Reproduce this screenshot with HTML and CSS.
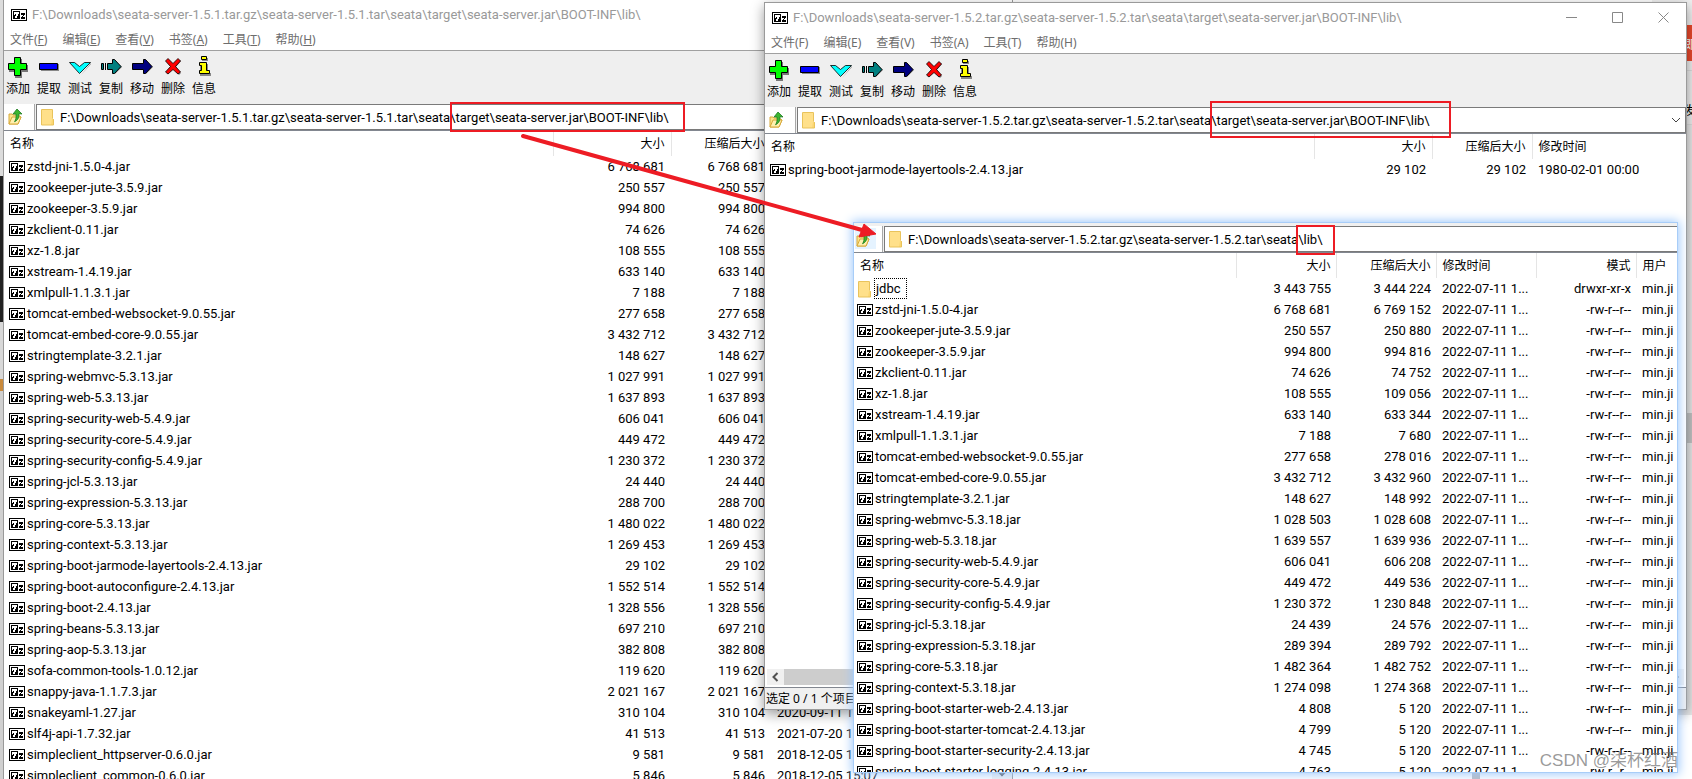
FILE: index.html
```html
<!DOCTYPE html>
<html lang="zh-CN">
<head>
<meta charset="utf-8">
<title>7-Zip</title>
<link rel="stylesheet" href="styles.css">
</head>
<body>
<svg class="defs" aria-hidden="true">
  <symbol id="z" viewBox="0 0 16 12"><g shape-rendering="crispEdges"><path d="M0 0h16v12H0z"/><path fill="#fff" d="M1 1h14v10H1z"/><path d="M2 2h7v8H2z"/><path fill="#fff" d="M3 3h5v2H7v2H6v2H4V7h1V5H4v1H3z"/><path d="M10 4h4v2h-1v1h-1v1h2v2h-4V8h1V7h1V6h-2z"/></g></symbol>
  <symbol id="folder" viewBox="0 0 14 17"><path fill="#ffe08a" d="M0 1h11v15H0z"/><path fill="#fbd672" d="M11 10h2v6h-3z"/><path fill="none" stroke="#e9c35b" d="M.5.5h11v9l1 1v5.500H.5z"/></symbol>
  <symbol id="up" viewBox="0 0 16 18"><path fill="#fbe58c" stroke="#d8a93a" d="M1 6h3l1 1h5l3 2-3 7H1z"/><path fill="#fff0ae" stroke="#d8a93a" d="M1 16l3-7h9l-3 7z"/><path fill="#3cb62f" stroke="#1c7a20" stroke-width=".8" d="M9 1l5 5-3-.3c0 4-1 6.500-4.500 8 1.500-2 1.800-4.500 1.500-7.700L5 6z"/></symbol>
  <symbol id="add" viewBox="0 0 24 22"><path fill="#777" d="M9 3h7v6h6v7h-6v6H9v-6H3V9h6z"/><path fill="#0f0" stroke="#000" d="M8.500 1.500h6v6h6v6h-6v6h-6v-6h-6v-6h6z"/></symbol>
  <symbol id="ext" viewBox="0 0 24 22"><path fill="#888" d="M4 8h18v7H4z"/><path fill="#00f" stroke="#000" d="M2.500 7.500h18v6h-18z"/></symbol>
  <symbol id="test" viewBox="0 0 24 22"><path fill="#888" d="M3 7l10 12L23 7v1L13 19z"/><path fill="#0ff" stroke="#000" stroke-width=".8" d="M1.500 6.500h5l5 4 5-4h6L11.500 17.500z"/></symbol>
  <symbol id="copy" viewBox="0 0 24 22"><path fill="#888" d="M15 4l8 7-7 7z"/><path fill="#008080" stroke="#000" d="M2.500 7.500h2v6h-2zM8.500 7.500h5v-4l2 0 6.500 7-6.500 7h-2v-4h-5z"/><path d="M6 7h1v7H6z"/></symbol>
  <symbol id="move" viewBox="0 0 24 22"><path fill="#888" d="M15 4l8 7-7 7z"/><path fill="#000080" stroke="#000" d="M2.500 7.500h11v-4l2 0 6.500 7-6.500 7h-2v-4h-11z"/></symbol>
  <symbol id="del" viewBox="0 0 24 22"><path fill="#888" d="M6 5l7 5 6-6 1 1-5 6 5 6-2 2z"/><path fill="#f00" stroke="#000" stroke-width=".8" d="M4.500 5l2.500-2.500 5 5 5-5L19.500 5l-5 5.500 5 5.500-2.500 2-5-4.500-5 4.500-2.500-2 5-5.500z"/></symbol>
  <symbol id="info" viewBox="0 0 24 22"><path fill="#888" d="M10 2h6v3h-6zM8 8h8v9h3v3H8z"/><path fill="#ff0" stroke="#000" d="M9.500.5h5v3h-5zM7.500 6.500h7v8h3v3h-10v-3h2v-5h-2z"/></symbol>
</svg>

<div class="desktop">
  <div class="left-strip"></div>
  <div class="right-strip"><span class="hot">即</span><span class="word">发</span></div>
  <div class="bottom-thumb"></div>

  <section class="window first">
    <header class="title"><svg class="z"><use href="#z"/></svg><span>F:\Downloads\seata-server-1.5.1.tar.gz\seata-server-1.5.1.tar\seata\target\seata-server.jar\BOOT-INF\lib\</span></header>
    <nav class="menu"><button>文件(<u>F</u>)</button><button>编辑(<u>E</u>)</button><button>查看(<u>V</u>)</button><button>书签(<u>A</u>)</button><button>工具(<u>T</u>)</button><button>帮助(<u>H</u>)</button></nav>
    <div class="tools"><button><svg><use href="#add"/></svg>添加</button><button><svg><use href="#ext"/></svg>提取</button><button><svg><use href="#test"/></svg>测试</button><button><svg><use href="#copy"/></svg>复制</button><button><svg><use href="#move"/></svg>移动</button><button><svg><use href="#del"/></svg>删除</button><button><svg><use href="#info"/></svg>信息</button></div>
    <div class="address"><button class="up" aria-label="向上"><svg><use href="#up"/></svg></button><label class="combo"><svg><use href="#folder"/></svg><input type="text" aria-label="路径" value="F:\Downloads\seata-server-1.5.1.tar.gz\seata-server-1.5.1.tar\seata\target\seata-server.jar\BOOT-INF\lib\"></label></div>
    <div class="list">
      <table>
        <colgroup><col class="c-name"><col class="c-size-wide"><col class="c-100"><col class="c-rest"></colgroup>
        <thead><tr><th>名称</th><th class="n">大小</th><th class="n">压缩后大小</th><th>修改时间</th></tr></thead>
        <tbody>
          <tr><td><svg class="z"><use href="#z"/></svg>zstd-jni-1.5.0-4.jar</td><td class="n">6 768 681</td><td class="n">6 768 681</td><td></td></tr>
          <tr><td><svg class="z"><use href="#z"/></svg>zookeeper-jute-3.5.9.jar</td><td class="n">250 557</td><td class="n">250 557</td><td></td></tr>
          <tr><td><svg class="z"><use href="#z"/></svg>zookeeper-3.5.9.jar</td><td class="n">994 800</td><td class="n">994 800</td><td></td></tr>
          <tr><td><svg class="z"><use href="#z"/></svg>zkclient-0.11.jar</td><td class="n">74 626</td><td class="n">74 626</td><td></td></tr>
          <tr><td><svg class="z"><use href="#z"/></svg>xz-1.8.jar</td><td class="n">108 555</td><td class="n">108 555</td><td></td></tr>
          <tr><td><svg class="z"><use href="#z"/></svg>xstream-1.4.19.jar</td><td class="n">633 140</td><td class="n">633 140</td><td></td></tr>
          <tr><td><svg class="z"><use href="#z"/></svg>xmlpull-1.1.3.1.jar</td><td class="n">7 188</td><td class="n">7 188</td><td></td></tr>
          <tr><td><svg class="z"><use href="#z"/></svg>tomcat-embed-websocket-9.0.55.jar</td><td class="n">277 658</td><td class="n">277 658</td><td></td></tr>
          <tr><td><svg class="z"><use href="#z"/></svg>tomcat-embed-core-9.0.55.jar</td><td class="n">3 432 712</td><td class="n">3 432 712</td><td></td></tr>
          <tr><td><svg class="z"><use href="#z"/></svg>stringtemplate-3.2.1.jar</td><td class="n">148 627</td><td class="n">148 627</td><td></td></tr>
          <tr><td><svg class="z"><use href="#z"/></svg>spring-webmvc-5.3.13.jar</td><td class="n">1 027 991</td><td class="n">1 027 991</td><td></td></tr>
          <tr><td><svg class="z"><use href="#z"/></svg>spring-web-5.3.13.jar</td><td class="n">1 637 893</td><td class="n">1 637 893</td><td></td></tr>
          <tr><td><svg class="z"><use href="#z"/></svg>spring-security-web-5.4.9.jar</td><td class="n">606 041</td><td class="n">606 041</td><td></td></tr>
          <tr><td><svg class="z"><use href="#z"/></svg>spring-security-core-5.4.9.jar</td><td class="n">449 472</td><td class="n">449 472</td><td></td></tr>
          <tr><td><svg class="z"><use href="#z"/></svg>spring-security-config-5.4.9.jar</td><td class="n">1 230 372</td><td class="n">1 230 372</td><td></td></tr>
          <tr><td><svg class="z"><use href="#z"/></svg>spring-jcl-5.3.13.jar</td><td class="n">24 440</td><td class="n">24 440</td><td></td></tr>
          <tr><td><svg class="z"><use href="#z"/></svg>spring-expression-5.3.13.jar</td><td class="n">288 700</td><td class="n">288 700</td><td></td></tr>
          <tr><td><svg class="z"><use href="#z"/></svg>spring-core-5.3.13.jar</td><td class="n">1 480 022</td><td class="n">1 480 022</td><td></td></tr>
          <tr><td><svg class="z"><use href="#z"/></svg>spring-context-5.3.13.jar</td><td class="n">1 269 453</td><td class="n">1 269 453</td><td></td></tr>
          <tr><td><svg class="z"><use href="#z"/></svg>spring-boot-jarmode-layertools-2.4.13.jar</td><td class="n">29 102</td><td class="n">29 102</td><td></td></tr>
          <tr><td><svg class="z"><use href="#z"/></svg>spring-boot-autoconfigure-2.4.13.jar</td><td class="n">1 552 514</td><td class="n">1 552 514</td><td></td></tr>
          <tr><td><svg class="z"><use href="#z"/></svg>spring-boot-2.4.13.jar</td><td class="n">1 328 556</td><td class="n">1 328 556</td><td></td></tr>
          <tr><td><svg class="z"><use href="#z"/></svg>spring-beans-5.3.13.jar</td><td class="n">697 210</td><td class="n">697 210</td><td></td></tr>
          <tr><td><svg class="z"><use href="#z"/></svg>spring-aop-5.3.13.jar</td><td class="n">382 808</td><td class="n">382 808</td><td></td></tr>
          <tr><td><svg class="z"><use href="#z"/></svg>sofa-common-tools-1.0.12.jar</td><td class="n">119 620</td><td class="n">119 620</td><td></td></tr>
          <tr><td><svg class="z"><use href="#z"/></svg>snappy-java-1.1.7.3.jar</td><td class="n">2 021 167</td><td class="n">2 021 167</td><td></td></tr>
          <tr><td><svg class="z"><use href="#z"/></svg>snakeyaml-1.27.jar</td><td class="n">310 104</td><td class="n">310 104</td><td>2020-09-11 1</td></tr>
          <tr><td><svg class="z"><use href="#z"/></svg>slf4j-api-1.7.32.jar</td><td class="n">41 513</td><td class="n">41 513</td><td>2021-07-20 1</td></tr>
          <tr><td><svg class="z"><use href="#z"/></svg>simpleclient_httpserver-0.6.0.jar</td><td class="n">9 581</td><td class="n">9 581</td><td>2018-12-05 1</td></tr>
          <tr><td><svg class="z"><use href="#z"/></svg>simpleclient_common-0.6.0.jar</td><td class="n">5 846</td><td class="n">5 846</td><td>2018-12-05 15:07</td></tr>
        </tbody>
      </table>
      <div class="vscroll"><svg viewBox="0 0 10 8"><path d="M1 1l4 4 4-4" fill="none" stroke="#505050" stroke-width="2"/></svg></div>
    </div>
  </section>

  <section class="window second">
    <header class="title"><svg class="z"><use href="#z"/></svg><span>F:\Downloads\seata-server-1.5.2.tar.gz\seata-server-1.5.2.tar\seata\target\seata-server.jar\BOOT-INF\lib\</span>
      <div class="controls"><button aria-label="最小化"><svg viewBox="0 0 11 11"><path d="M0 5.500h11"/></svg></button><button aria-label="最大化"><svg viewBox="0 0 11 11"><path d="M.5.5h10v10H.5z"/></svg></button><button aria-label="关闭"><svg viewBox="0 0 11 11"><path d="M.5.5l10 10M10.500.5l-10 10"/></svg></button></div>
    </header>
    <nav class="menu"><button>文件(F)</button><button>编辑(E)</button><button>查看(V)</button><button>书签(A)</button><button>工具(T)</button><button>帮助(H)</button></nav>
    <div class="tools"><button><svg><use href="#add"/></svg>添加</button><button><svg><use href="#ext"/></svg>提取</button><button><svg><use href="#test"/></svg>测试</button><button><svg><use href="#copy"/></svg>复制</button><button><svg><use href="#move"/></svg>移动</button><button><svg><use href="#del"/></svg>删除</button><button><svg><use href="#info"/></svg>信息</button></div>
    <div class="address"><button class="up" aria-label="向上"><svg><use href="#up"/></svg></button><label class="combo"><svg><use href="#folder"/></svg><input type="text" aria-label="路径" value="F:\Downloads\seata-server-1.5.2.tar.gz\seata-server-1.5.2.tar\seata\target\seata-server.jar\BOOT-INF\lib\"><svg class="drop" viewBox="0 0 10 6"><path d="M1 1l4 4 4-4" fill="none" stroke="#444"/></svg></label></div>
    <div class="list">
      <table>
        <colgroup><col class="c-name"><col class="c-size-wide"><col class="c-100"><col class="c-rest"></colgroup>
        <thead><tr><th>名称</th><th class="n">大小</th><th class="n">压缩后大小</th><th>修改时间</th></tr></thead>
        <tbody><tr><td><svg class="z"><use href="#z"/></svg>spring-boot-jarmode-layertools-2.4.13.jar</td><td class="n">29 102</td><td class="n">29 102</td><td>1980-02-01 00:00</td></tr></tbody>
      </table>
    </div>
    <div class="hscroll"><svg viewBox="0 0 8 10"><path d="M6 1L2 5l4 4" fill="none" stroke="#505050" stroke-width="2"/></svg><div class="thumb"></div><svg viewBox="0 0 8 10"><path d="M2 1l4 4-4 4" fill="none" stroke="#505050" stroke-width="2"/></svg></div>
    <footer class="status">选定 0 / 1 个项目</footer>
  </section>

  <section class="window third">
    <div class="address"><button class="up active" aria-label="向上"><svg><use href="#up"/></svg></button><label class="combo"><svg><use href="#folder"/></svg><input type="text" aria-label="路径" value="F:\Downloads\seata-server-1.5.2.tar.gz\seata-server-1.5.2.tar\seata\lib\"></label></div>
    <div class="list">
      <table>
        <colgroup><col class="c-rest"><col class="c-100"><col class="c-100"><col class="c-100"><col class="c-100"><col class="c-user"></colgroup>
        <thead><tr><th>名称</th><th class="n">大小</th><th class="n">压缩后大小</th><th>修改时间</th><th class="n">模式</th><th>用户</th></tr></thead>
        <tbody>
          <tr><td><svg class="folder"><use href="#folder"/></svg><span class="focus">jdbc</span></td><td class="n">3 443 755</td><td class="n">3 444 224</td><td>2022-07-11 1...</td><td class="n">drwxr-xr-x</td><td>min.ji</td></tr>
          <tr><td><svg class="z"><use href="#z"/></svg>zstd-jni-1.5.0-4.jar</td><td class="n">6 768 681</td><td class="n">6 769 152</td><td>2022-07-11 1...</td><td class="n">-rw-r--r--</td><td>min.ji</td></tr>
          <tr><td><svg class="z"><use href="#z"/></svg>zookeeper-jute-3.5.9.jar</td><td class="n">250 557</td><td class="n">250 880</td><td>2022-07-11 1...</td><td class="n">-rw-r--r--</td><td>min.ji</td></tr>
          <tr><td><svg class="z"><use href="#z"/></svg>zookeeper-3.5.9.jar</td><td class="n">994 800</td><td class="n">994 816</td><td>2022-07-11 1...</td><td class="n">-rw-r--r--</td><td>min.ji</td></tr>
          <tr><td><svg class="z"><use href="#z"/></svg>zkclient-0.11.jar</td><td class="n">74 626</td><td class="n">74 752</td><td>2022-07-11 1...</td><td class="n">-rw-r--r--</td><td>min.ji</td></tr>
          <tr><td><svg class="z"><use href="#z"/></svg>xz-1.8.jar</td><td class="n">108 555</td><td class="n">109 056</td><td>2022-07-11 1...</td><td class="n">-rw-r--r--</td><td>min.ji</td></tr>
          <tr><td><svg class="z"><use href="#z"/></svg>xstream-1.4.19.jar</td><td class="n">633 140</td><td class="n">633 344</td><td>2022-07-11 1...</td><td class="n">-rw-r--r--</td><td>min.ji</td></tr>
          <tr><td><svg class="z"><use href="#z"/></svg>xmlpull-1.1.3.1.jar</td><td class="n">7 188</td><td class="n">7 680</td><td>2022-07-11 1...</td><td class="n">-rw-r--r--</td><td>min.ji</td></tr>
          <tr><td><svg class="z"><use href="#z"/></svg>tomcat-embed-websocket-9.0.55.jar</td><td class="n">277 658</td><td class="n">278 016</td><td>2022-07-11 1...</td><td class="n">-rw-r--r--</td><td>min.ji</td></tr>
          <tr><td><svg class="z"><use href="#z"/></svg>tomcat-embed-core-9.0.55.jar</td><td class="n">3 432 712</td><td class="n">3 432 960</td><td>2022-07-11 1...</td><td class="n">-rw-r--r--</td><td>min.ji</td></tr>
          <tr><td><svg class="z"><use href="#z"/></svg>stringtemplate-3.2.1.jar</td><td class="n">148 627</td><td class="n">148 992</td><td>2022-07-11 1...</td><td class="n">-rw-r--r--</td><td>min.ji</td></tr>
          <tr><td><svg class="z"><use href="#z"/></svg>spring-webmvc-5.3.18.jar</td><td class="n">1 028 503</td><td class="n">1 028 608</td><td>2022-07-11 1...</td><td class="n">-rw-r--r--</td><td>min.ji</td></tr>
          <tr><td><svg class="z"><use href="#z"/></svg>spring-web-5.3.18.jar</td><td class="n">1 639 557</td><td class="n">1 639 936</td><td>2022-07-11 1...</td><td class="n">-rw-r--r--</td><td>min.ji</td></tr>
          <tr><td><svg class="z"><use href="#z"/></svg>spring-security-web-5.4.9.jar</td><td class="n">606 041</td><td class="n">606 208</td><td>2022-07-11 1...</td><td class="n">-rw-r--r--</td><td>min.ji</td></tr>
          <tr><td><svg class="z"><use href="#z"/></svg>spring-security-core-5.4.9.jar</td><td class="n">449 472</td><td class="n">449 536</td><td>2022-07-11 1...</td><td class="n">-rw-r--r--</td><td>min.ji</td></tr>
          <tr><td><svg class="z"><use href="#z"/></svg>spring-security-config-5.4.9.jar</td><td class="n">1 230 372</td><td class="n">1 230 848</td><td>2022-07-11 1...</td><td class="n">-rw-r--r--</td><td>min.ji</td></tr>
          <tr><td><svg class="z"><use href="#z"/></svg>spring-jcl-5.3.18.jar</td><td class="n">24 439</td><td class="n">24 576</td><td>2022-07-11 1...</td><td class="n">-rw-r--r--</td><td>min.ji</td></tr>
          <tr><td><svg class="z"><use href="#z"/></svg>spring-expression-5.3.18.jar</td><td class="n">289 394</td><td class="n">289 792</td><td>2022-07-11 1...</td><td class="n">-rw-r--r--</td><td>min.ji</td></tr>
          <tr><td><svg class="z"><use href="#z"/></svg>spring-core-5.3.18.jar</td><td class="n">1 482 364</td><td class="n">1 482 752</td><td>2022-07-11 1...</td><td class="n">-rw-r--r--</td><td>min.ji</td></tr>
          <tr><td><svg class="z"><use href="#z"/></svg>spring-context-5.3.18.jar</td><td class="n">1 274 098</td><td class="n">1 274 368</td><td>2022-07-11 1...</td><td class="n">-rw-r--r--</td><td>min.ji</td></tr>
          <tr><td><svg class="z"><use href="#z"/></svg>spring-boot-starter-web-2.4.13.jar</td><td class="n">4 808</td><td class="n">5 120</td><td>2022-07-11 1...</td><td class="n">-rw-r--r--</td><td>min.ji</td></tr>
          <tr><td><svg class="z"><use href="#z"/></svg>spring-boot-starter-tomcat-2.4.13.jar</td><td class="n">4 799</td><td class="n">5 120</td><td>2022-07-11 1...</td><td class="n">-rw-r--r--</td><td>min.ji</td></tr>
          <tr><td><svg class="z"><use href="#z"/></svg>spring-boot-starter-security-2.4.13.jar</td><td class="n">4 745</td><td class="n">5 120</td><td>2022-07-11 1...</td><td class="n">-rw-r--r--</td><td>min.ji</td></tr>
          <tr><td><svg class="z"><use href="#z"/></svg>spring-boot-starter-logging-2.4.13.jar</td><td class="n">4 763</td><td class="n">5 120</td><td>2022-07-11 1...</td><td class="n">-rw-r--r--</td><td>min.ji</td></tr>
        </tbody>
      </table>
    </div>
  </section>

  <svg class="marks" aria-hidden="true">
    <g fill="none" stroke="#ed1c24" stroke-width="2"><path d="M451 103h233v28H451z"/><path d="M1211 102h239v35H1211z"/><path d="M1297 226h37v28h-37z"/></g>
    <path d="M523 136L862 230" stroke="#ed1c24" stroke-width="4" stroke-linecap="round"/><path d="M876 234l-12-10-5 13z" fill="#ed1c24" stroke="#ed1c24"/>
  </svg>
  <div class="credit">CSDN @柒杯红酒</div>
</div>
</body>
</html>
```

FILE: styles.css
```css
* { box-sizing: border-box; }
body {
  margin: 0;
  font: 12px/21px "Noto Sans", "Noto Sans CJK SC", sans-serif;
  color: #000;
}
button, input { font: inherit; color: inherit; border: 0; background: none; padding: 0; margin: 0; }
svg { flex: none; }
.defs { position: absolute; width: 0; height: 0; }
.desktop { position: relative; height: 100vh; overflow: hidden; background: #fff; }

.left-strip {
  position: absolute; top: 0; bottom: 0; left: 0; width: 3px;
  background: linear-gradient(#dcdcdc 176px, #222 176px 322px, #d8d8d8 322px 379px, #c98a3c 379px 391px, #d0d0d0 391px);
}
.right-strip {
  position: absolute; top: 0; right: 0; width: 40px; height: 715px; overflow: hidden;
  background: linear-gradient(#f0f0f0 25px, #e8482b 25px 61px, #eee 61px 70px, #ddd 70px 71px, #eee 71px 124px, #ddd 124px 125px, #e8e8e8 125px 413px, #c4c4c4 413px 443px, #e8e8e8 443px);
}
.right-strip span { display: block; padding-left: 32px; }
.right-strip .hot { padding-top: 34px; color: #fff; }
.right-strip .word { padding-top: 45px; }
.bottom-thumb { position: absolute; left: 1472px; bottom: 0; width: 8px; height: 8px; background: #b8bcc2; }

.window { position: absolute; display: flex; flex-direction: column; background: #fff; overflow: hidden; }
.first { left: 3px; top: -1px; right: 679px; bottom: -30px; border: 1px solid #9a9a9a; }
.second { left: 764px; top: 2px; right: 5px; bottom: 69px; border: 1px solid #9a9a9a; box-shadow: 0 4px 12px rgba(0, 0, 0, .4); }
.third { left: 854px; top: 223px; right: 15px; bottom: 7px; border-top: 3px solid #f0f0f0; box-shadow: 0 0 0 1px #a8cdf8, 0 0 10px 2px #9cc8fb; }

.title span, .combo input, td { font: 13px/21px Roboto, "Noto Sans", sans-serif; }

.title { flex: none; display: flex; align-items: center; height: 29px; padding-left: 7px; gap: 5px; color: #999; }
.title span { flex: 1; white-space: nowrap; }
.z { width: 16px; height: 12px; }
.controls { display: flex; }
.controls button { width: 46px; height: 28px; display: grid; place-items: center; }
.controls svg { width: 11px; height: 11px; fill: none; stroke: #888; }
.menu { flex: none; display: flex; gap: 15px; height: 21px; padding-left: 6px; color: #6d6d6d; }
.tools { flex: none; display: flex; gap: 1px; height: 54px; border-top: 1px solid #a0a0a0; background: #efefef; padding-top: 5px; }
.tools button { width: 30px; padding-right: 2px; display: flex; flex-direction: column; align-items: center; }
.tools svg { width: 24px; height: 22px; }

.address { flex: none; display: flex; height: 26px; gap: 1px; background: #f0f0f0; }
.up { width: 31px; border-right: 1px solid #a8a8a8; background: #fff; display: flex; align-items: center; padding-left: 4px; }
.up svg { width: 16px; height: 18px; }
.up.active { background: linear-gradient(#e5f3ff, #e5f3ff) 1px 2px / 21px 21px no-repeat #fff; padding-left: 2px; width: 29px; }
.combo { flex: 1; display: flex; align-items: center; gap: 5px; border: 1px solid #7a7a7a; background: #fff; padding: 0 4px; min-width: 0; }
.third .combo { border-right: 0; }
.combo svg { width: 14px; height: 17px; }
.combo .drop { width: 10px; height: 6px; }
.combo input { flex: 1; min-width: 0; outline: 0; }

.list { flex: 1; min-height: 0; overflow: hidden; display: flex; border-top: 1px solid #828790; position: relative; }
table { width: 100%; height: max-content; table-layout: fixed; border-collapse: collapse; }
.c-name { width: 549px; }
.c-size-wide { width: 118px; }
.c-100 { width: 100px; }
.c-user { width: 41px; }
th { height: 25px; padding: 0 6px; font-weight: 400; text-align: left; white-space: nowrap; border-right: 1px solid #e5e5e5; }
th:last-child { border-right: 0; }
td { height: 21px; padding: 0 6px; white-space: nowrap; }
td:first-child { padding-left: 5px; }
.n { text-align: right; }
td svg { vertical-align: -2px; margin-right: 2px; }
.third td:first-child { padding-left: 3px; }
.third td, .third th { padding-right: 5px; }
.third td:last-child, .third th:last-child { padding-right: 0; }
td .folder { width: 14px; height: 17px; margin-left: 1px; vertical-align: middle; }
.focus { display: inline-block; height: 21px; line-height: 19px; border: 1px dotted #000; padding: 0 5px 0 1px; }
.vscroll { flex: none; width: 20px; display: flex; align-items: flex-end; justify-content: center; padding-bottom: 30px; background: #f0f0f0; }
.vscroll svg { width: 10px; height: 8px; }

.hscroll { flex: none; display: flex; align-items: center; height: 16px; margin: 0 2px 2px; background: #f0f0f0; }
.hscroll svg { width: 17px; height: 10px; }
.thumb { flex: 1; height: 100%; background: #cdcdcd; margin-right: 60px; }
.status { flex: none; height: 22px; border-top: 1px solid #828790; background: #f0f0f0; padding-left: 1px; }

.marks { position: absolute; inset: 0; width: 100%; height: 100%; pointer-events: none; }
.credit { position: absolute; right: 14px; bottom: 7px; font: 17px/22px "Liberation Sans", "Noto Sans CJK SC", sans-serif; color: rgba(110, 110, 110, .7); }
```
